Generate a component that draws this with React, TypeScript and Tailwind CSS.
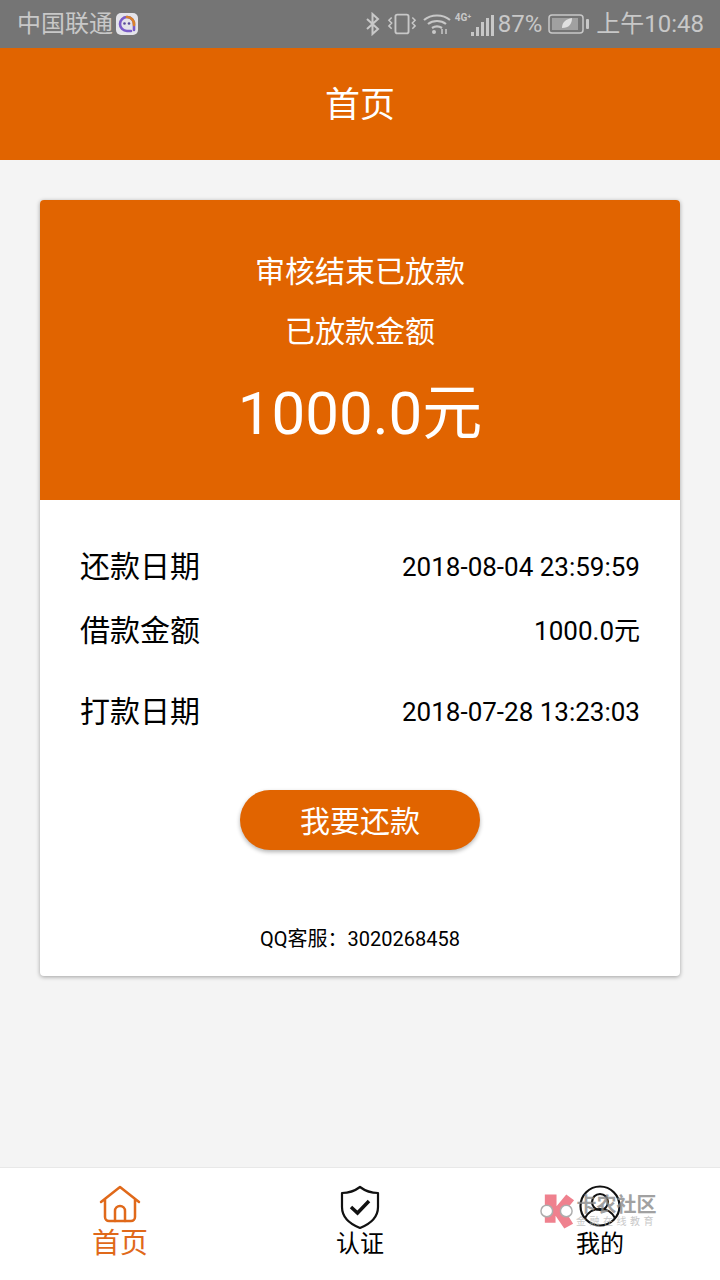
import React from 'react';

const FONT = 'font-[Roboto,"Noto_Sans_CJK_SC",sans-serif]';

function InfoRow({ label, value, className }: { label: string; value: string; className: string }) {
    return (
        <div className={`flex items-center justify-between text-black ${className}`}>
            <span className="text-[30px] leading-[40px]">{label}</span>
            <span className="text-[26px] leading-[40px]">{value}</span>
        </div>
    );
}

function StatusBar() {
    return (
        <div className="h-12 bg-[#757575] flex items-center justify-between pl-[17px] pr-4 text-[#c8c8c8]">
            <div className="flex items-center gap-[3px]">
                <span className="text-[24px] leading-none">中国联通</span>
                <svg width="22" height="22" viewBox="0 0 22 22">
                    <rect width="22" height="22" rx="5" fill="#e4e4ea" />
                    <path d="M18 17V11a7 7 0 1 0-7 7h4" fill="none" stroke="#7a5bc8" strokeWidth="2.6" strokeLinecap="round" />
                    <path d="M18 12a7 7 0 0 0-7-8" fill="none" stroke="#d9822b" strokeWidth="2.6" strokeLinecap="round" />
                    <circle cx="8.5" cy="10.5" r="1.3" fill="#5a4a9a" />
                    <circle cx="13" cy="10.5" r="1.3" fill="#5a4a9a" />
                </svg>
            </div>
            <div className="flex items-center">
                <svg width="16" height="24" viewBox="0 0 16 24" fill="none" stroke="#c8c8c8" strokeWidth="2">
                    <path d="M2 7l11 10-5.500 5V2L13 7 2 17" />
                </svg>
                <svg width="30" height="24" viewBox="0 0 32 24" fill="none" stroke="#c8c8c8" strokeWidth="2" className="ml-[6px]">
                    <rect x="9" y="2" width="14" height="20" rx="2" />
                    <path d="M5 5l-3 3 3 3-3 3 3 3M27 5l3 3-3 3 3 3-3 3" strokeWidth="1.6" />
                </svg>
                <svg width="30" height="24" viewBox="0 0 30 24" fill="none" stroke="#c8c8c8" strokeWidth="2.2" className="ml-[5px]">
                    <path d="M2 8c7-6 19-6 26 0M6 12c5-4 13-4 18 0M10 16c3-2 7-2 10 0" />
                    <circle cx="12" cy="20" r="2" fill="#c8c8c8" stroke="none" />
                    <path d="M20 22v-5M24 22v-5" strokeWidth="1.500" />
                </svg>
                <div className="ml-[3px] relative w-[39px] h-6">
                    <span className="absolute left-0 top-0 text-[10px] leading-[12px] font-bold">4G⁺</span>
                    <div className="absolute right-0 bottom-0 flex items-end gap-[2px]">
                        <div className="w-[3px] h-[4px] bg-[#c8c8c8]" />
                        <div className="w-[3px] h-[9px] bg-[#c8c8c8]" />
                        <div className="w-[3px] h-[14px] bg-[#c8c8c8]" />
                        <div className="w-[3px] h-[18px] bg-[#c8c8c8]" />
                        <div className="w-[3px] h-[21px] bg-[#c8c8c8]" />
                    </div>
                </div>
                <span className="ml-[4px] text-[24px] leading-none">87%</span>
                <svg width="42" height="20" viewBox="0 0 42 20" className="ml-[6px]">
                    <rect x="1" y="1" width="34" height="18" rx="3" fill="none" stroke="#c8c8c8" strokeWidth="1.500" />
                    <rect x="4" y="4" width="26" height="12" fill="#a0a0a0" />
                    <path d="M14 14c0-6 4-9 10-10 0 6-3 10-10 10z" fill="#e0e0e0" />
                    <rect x="38" y="5" width="3" height="10" rx="1" fill="#c8c8c8" />
                </svg>
                <span className="ml-[6px] text-[24px] leading-none">上午10:48</span>
            </div>
        </div>
    );
}

export default function App() {
    return (
        <div className={`w-[720px] h-[1280px] bg-[#f4f4f4] flex flex-col overflow-hidden ${FONT}`}>
            <StatusBar />

            {/* Header */}
            <header className="h-28 bg-[#e16400] flex items-center justify-center">
                <h1 className="text-[35px] leading-[54px] mt-[4px] text-white font-normal">首页</h1>
            </header>

            {/* Main card */}
            <main className="flex-1 px-10 pt-10">
                <div className="rounded bg-white shadow-[0_1px_4px_rgba(0,0,0,0.35)] overflow-hidden">
                    <div className="h-[300px] bg-[#e16400] flex flex-col items-center text-white pt-[50px]">
                        <p className="text-[30px] leading-[44px]">审核结束已放款</p>
                        <p className="text-[30px] leading-[44px] mt-4">已放款金额</p>
                        <p className="text-[60px] leading-[70px] mt-[25px]">1000.0元</p>
                    </div>
                    <div className="px-10 pt-[47px] h-[476px]">
                        <InfoRow label="还款日期" value="2018-08-04 23:59:59" className="" />
                        <InfoRow label="借款金额" value="1000.0元" className="mt-6" />
                        <InfoRow label="打款日期" value="2018-07-28 13:23:03" className="mt-[41px]" />
                        <div className="flex justify-center mt-[58px]">
                            <button className="w-60 h-[60px] rounded-full bg-[#e16400] text-white text-[30px] leading-[64px] shadow-[0_2px_4px_rgba(0,0,0,0.3)]">
                                我要还款
                            </button>
                        </div>
                        <p className="text-center text-black text-[20px] leading-6 mt-[77px]">QQ客服：3020268458</p>
                    </div>
                </div>
            </main>

            {/* Bottom tabs */}
            <nav className="h-[113px] bg-white border-t border-[#e8e8e8] grid grid-cols-3 relative">
                <div className="flex flex-col items-center pt-[17px] text-[#e0691a]">
                    <svg width="42" height="38" viewBox="0 0 42 38" fill="none" stroke="currentColor" strokeWidth="2.500" strokeLinecap="round" strokeLinejoin="round">
                        <path d="M2 17L21 2l19 15M6 14v18a4 4 0 0 0 4 4h22a4 4 0 0 0 4-4V14" />
                        <path d="M16 36V26a5 5 0 0 1 10 0v10" />
                    </svg>
                    <span className="text-[28px] leading-[34px] mt-[4px]">首页</span>
                </div>
                <div className="flex flex-col items-center pt-[17px] text-black">
                    <svg width="40" height="44" viewBox="0 0 40 44" fill="none" stroke="#111" strokeWidth="2.200" strokeLinejoin="round">
                        <path d="M20 2c4 3 11 6 18 6v14c0 10-8 17-18 21C10 39 2 32 2 22V8c7 0 14-3 18-6z" />
                        <path d="M11 22l6.500 6L29 16" strokeWidth="3.500" strokeLinejoin="miter" />
                    </svg>
                    <span className="text-[24px] leading-[30px]">认证</span>
                </div>
                <div className="flex flex-col items-center pt-[17px] text-black relative">
                    <svg width="42" height="42" viewBox="0 0 42 42" fill="none" stroke="#111" strokeWidth="2.200">
                        <circle cx="21" cy="21" r="19.500" />
                        <circle cx="21" cy="17" r="8" />
                        <path d="M6 33c3-6 8-9 15-9s12 3 15 9" />
                    </svg>
                    <span className="text-[24px] leading-[30px] mt-[2px]">我的</span>
                    {/* Forum watermark */}
                    <div className="absolute left-[59px] top-[24px] flex items-center opacity-80">
                        <svg width="37" height="38" viewBox="0 0 38 38">
                            <path d="M6 2h12v12L28 2l8 6-9 11 8 13-9 5-9-13v7H6z" fill="#ec6272" />
                            <circle cx="8" cy="19" r="6" fill="#fff" stroke="#999" strokeWidth="1.500" />
                            <circle cx="28" cy="19" r="6" fill="#fff" stroke="#999" strokeWidth="1.500" />
                        </svg>
                        <div className="flex flex-col items-center text-[#8a8a8a]">
                            <span className="text-[20px] leading-[22px] font-bold">卡农社区</span>
                            <span className="text-[10px] leading-[12px] tracking-[3.5px] text-[#bbb]">金融在线教育</span>
                        </div>
                    </div>
                </div>
            </nav>
        </div>
    );
}
